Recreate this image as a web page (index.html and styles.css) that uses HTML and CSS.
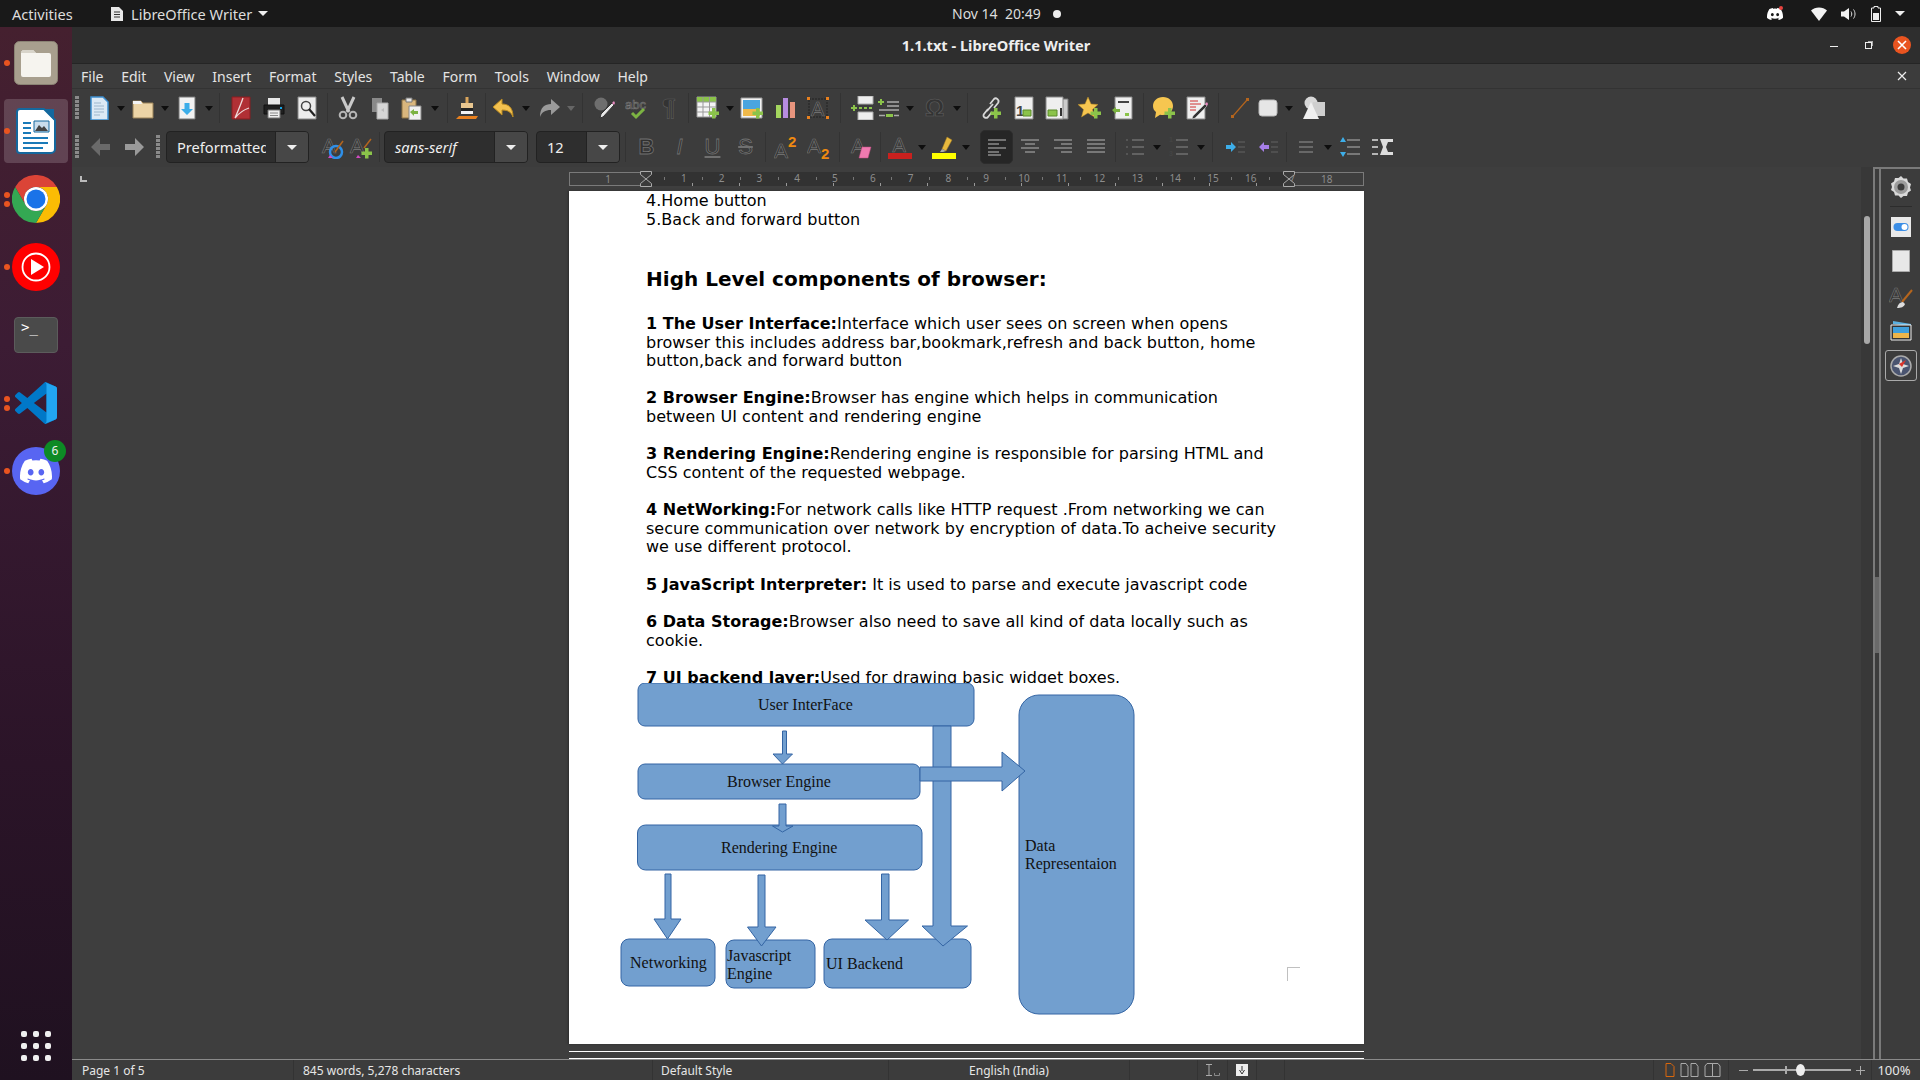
FILE: index.html
```html
<!DOCTYPE html>
<html>
<head>
  <title>1.1.txt - LibreOffice Writer</title>
  <link rel="stylesheet" href="styles.css">
</head>
<body>
  <svg class="defs" width="0" height="0">
    <defs>
      <path id="plus" d="M16 12h3.500v3.500H23V19h-3.500v3.500H16V19h-3.500v-3.500H16z" fill="#8bc34a"/>
      <symbol id="i-new" viewBox="0 0 24 24"><path d="M4 1h12l5 5v18H4z" fill="#dce9f5" stroke="#3d8ed0" stroke-width="1.500"/><path d="M7 7h7M7 10h10M7 13h10M7 16h10M7 19h6" stroke="#9db6cc"/></symbol>
      <symbol id="i-open" viewBox="0 0 24 24"><path d="M2 5h8l2 2h10v15H2z" fill="#ecd4a6" stroke="#9a8258"/><path d="M2 5h8l1 3H2z" fill="#f4f4f4"/></symbol>
      <symbol id="i-save" viewBox="0 0 24 24"><path d="M4 1h16v22H4z" fill="#f2f2f2" stroke="#777"/><path d="M9.500 7h5v6H18l-6 6-6-6h3.500z" fill="#3daee9"/></symbol>
      <symbol id="i-pdf" viewBox="0 0 24 24"><path d="M3 1h18v22H3z" fill="#b03035" stroke="#8b1d20"/><path d="M14 2C12 8 9 15 6 22M6 22c4-5 8-8 14-10" fill="none" stroke="#eed9d9" stroke-width="1.300"/></symbol>
      <symbol id="i-print" viewBox="0 0 24 24"><path d="M6 2h12v7H6z" fill="#e8e8e8"/><path d="M2 9h20v9H2z" fill="#1f1f1f" stroke="#111"/><path d="M6 14h12v8H6z" fill="#efefef" stroke="#777"/><path d="M8 17h8M8 19.500h8" stroke="#888"/><path d="M18 11h2v2h-2z" fill="#16a5e6"/></symbol>
      <symbol id="i-preview" viewBox="0 0 24 24"><path d="M3 1h18v22H3z" fill="#ececec" stroke="#888"/><circle cx="11" cy="10" r="4.500" fill="#eee" stroke="#444" stroke-width="1.500"/><path d="M14 13l6 7" stroke="#222" stroke-width="2.200"/></symbol>
      <symbol id="i-cut" viewBox="0 0 24 24"><path d="M6 1l7 15M18 1l-7 15" stroke="#c9c9c9" stroke-width="3"/><circle cx="7" cy="19" r="3.300" fill="none" stroke="#b5b5b5" stroke-width="2"/><circle cx="17" cy="19" r="3.300" fill="none" stroke="#b5b5b5" stroke-width="2"/></symbol>
      <symbol id="i-copy" viewBox="0 0 24 24"><path d="M4 2h10v14H4z" fill="#8a8a8a"/><path d="M9 7h11v16H9z" fill="#d6d6d6" stroke="#aaa"/><path d="M13 14l3-2v4z" fill="#bbb"/></symbol>
      <symbol id="i-paste" viewBox="0 0 24 24"><path d="M3 4h14v18H3z" fill="#d9b67d" stroke="#8d7345"/><path d="M7 2h6v4H7z" fill="#e8e8e8" stroke="#777"/><path d="M10 10h12v14H10z" fill="#f0f0f0" stroke="#888"/><path d="M11 16l4-3v2h4v3h-4v2z" fill="#7cb342"/></symbol>
      <symbol id="i-brush" viewBox="0 0 24 24"><path d="M10.500 1h3v6h-3z" fill="#d9a45b"/><path d="M6 7h12v5H6z" fill="#e8c690"/><path d="M6 12h12v3H6z" fill="#222"/><path d="M6 15h12v3H6z" fill="#f2f2f2"/><path d="M1 23l3-3h19l-2 3z" fill="#e8801e"/></symbol>
      <symbol id="i-undo" viewBox="0 0 24 24"><path d="M10 3v5c6 0 11 3 11 13-2-5-5-7-11-7v5L1 11z" fill="#f3c14f" stroke="#b98a22"/></symbol>
      <symbol id="i-redo" viewBox="0 0 24 24"><path d="M14 3v5C8 8 3 11 3 21c2-5 5-7 11-7v5l9-8z" fill="#9a9a9a"/></symbol>
      <symbol id="i-find" viewBox="0 0 24 24"><circle cx="8" cy="8" r="6.500" fill="#6e6e6e"/><path d="M7 22l3-1L21 9l-2-2L8 18z" fill="#e8e8e8" stroke="#333"/><path d="M19 7l2 2 1-2-1-2z" fill="#e88ac0"/></symbol>
      <symbol id="i-abc" viewBox="0 0 24 24"><text x="0" y="13" class="ic-txt" font-size="13">abc</text><path d="M7 17l4 4 8-8" fill="none" stroke="#7cb342" stroke-width="3"/></symbol>
      <symbol id="i-table" viewBox="0 0 24 24"><path d="M1 1h19v20H1z" fill="#f4f4f4" stroke="#999"/><path d="M1 1h19v5H1z" fill="#8bc34a"/><path d="M7 1v20M13.500 1v20M1 6h19M1 11h19M1 16h19" stroke="#999"/><use href="#plus"/></symbol>
      <symbol id="i-image" viewBox="0 0 24 24"><path d="M1 2h21v20H1z" fill="#f4f4f4" stroke="#999"/><path d="M3 4h17v9H3z" fill="#4aa5e0"/><path d="M3 13h17v7H3z" fill="#f0b94a"/><use href="#plus"/></symbol>
      <symbol id="i-chart" viewBox="0 0 24 24"><path d="M3 9h5v13H3z" fill="#a4d65e"/><path d="M10 2h5v20h-5z" fill="#b68ce0"/><path d="M17 6h5v16h-5z" fill="#e8957e"/></symbol>
      <symbol id="i-tbox" viewBox="0 0 24 24"><path d="M3 3h18v18H3z" fill="none" stroke="#222" stroke-dasharray="2 1"/><text x="5" y="20" class="ic-txt" font-size="20">A</text><path d="M1 1h3v3H1zM20 1h3v3h-3zM1 20h3v3H1zM20 20h3v3h-3z" fill="#e8801e"/></symbol>
      <symbol id="i-break" viewBox="0 0 24 24"><path d="M8 0h15v8H8zM8 16h15v8H8z" fill="#eee" stroke="#aaa"/><path d="M9 12h14" stroke="#8bc34a" stroke-width="2" stroke-dasharray="3 2"/><path d="M3 9h2v2h2v2H5v2H3v-2H1v-2h2z" fill="#8bc34a"/></symbol>
      <symbol id="i-field" viewBox="0 0 24 24"><path d="M3 3h2v2h2v2H5v2H3V7H1V5h2z" fill="#8bc34a"/><path d="M10 6h12M10 10h12M2 14h20" stroke="#aaa" stroke-width="1.500"/><path d="M9 18h7v3H9z" fill="#8bc34a"/><path d="M2 19.500h6M17 19.500h5" stroke="#aaa" stroke-width="1.500"/></symbol>
      <symbol id="i-link" viewBox="0 0 24 24"><path d="M12 8l4-5c2-2 6 1 4 4l-4 5M10 13l-4 5c-2 3 2 5 4 3l4-5M9 15l6-7" fill="none" stroke="#d8d8d8" stroke-width="1.800"/><use href="#plus"/></symbol>
      <symbol id="i-foot" viewBox="0 0 24 24"><path d="M3 1h18v22H3z" fill="#efefef" stroke="#888"/><text x="4" y="20" class="ic-num" font-size="15">1</text><path d="M11 14h8v6h-8z" fill="#8bc34a" stroke="#5b8a2a"/></symbol>
      <symbol id="i-end" viewBox="0 0 24 24"><path d="M6 3h17v20H6z" fill="#ccc" stroke="#777"/><path d="M1 1h17v22H1z" fill="#efefef" stroke="#888"/><path d="M3 14h9v6H3z" fill="#8bc34a" stroke="#5b8a2a"/><path d="M15 12h2v8h-2z" fill="#333"/></symbol>
      <symbol id="i-star" viewBox="0 0 24 24"><path d="M10 1l3 7 7 .500-5.500 5 2 7.500-6.500-4-6.500 4 2-7.500L0 8.500 7 8z" fill="#f6c650" stroke="#b98a22" stroke-width=".5"/><use href="#plus"/></symbol>
      <symbol id="i-cross" viewBox="0 0 24 24"><path d="M4 1h17v22H4z" fill="#efefef" stroke="#888"/><path d="M7 6h11" stroke="#444" stroke-width="2"/><path d="M1 14l4-3v2h4v3H5v2z" fill="#7cb342"/><path d="M14 17h4v3h-4z" fill="#8bc34a"/></symbol>
      <symbol id="i-comment" viewBox="0 0 24 24"><path d="M11 1c6 0 10 4 10 9s-4 9-10 9c-1 0-2 0-3-.3L3 22l1-6C2 14.500 1 12.500 1 10c0-5 4-9 10-9z" fill="#f6c650"/><use href="#plus"/></symbol>
      <symbol id="i-track" viewBox="0 0 24 24"><path d="M2 1h18v22H2z" fill="#efefef" stroke="#888"/><path d="M5 5h8M5 8h11M5 11h6M5 14h6" stroke="#d03030"/><path d="M7 23l3-1 12-12-2-2L8 20z" fill="#333" stroke="#ddd" stroke-width=".5"/><path d="M20 8l2 2 1-2-1-2z" fill="#e88ac0"/></symbol>
      <symbol id="i-line" viewBox="0 0 24 24"><path d="M5 20L19 4" stroke="#b5651d" stroke-width="1.200"/><path d="M3 19h3v3H3zM18 2h3v3h-3z" fill="#b5651d"/></symbol>
      <symbol id="i-rect" viewBox="0 0 24 24"><rect x="3" y="4" width="18" height="16" rx="3" fill="#e6e6e6" stroke="#bbb"/></symbol>
      <symbol id="i-shapes" viewBox="0 0 24 24"><circle cx="9" cy="7" r="6.500" fill="#d8d8d8"/><path d="M11 6h12v14H11z" fill="#cfcfcf"/><path d="M9 6l8 17H1z" fill="#f0f0f0"/></symbol>
      <symbol id="i-back" viewBox="0 0 24 24"><path d="M11 3v6h10v6H11v6L2 12z" fill="#6a6a6a"/></symbol>
      <symbol id="i-fwd" viewBox="0 0 24 24"><path d="M13 3v6H3v6h10v6l9-9z" fill="#9a9a9a"/></symbol>
      <symbol id="i-a-up" viewBox="0 0 24 24"><text x="1" y="18" class="ic-txt" font-size="21">A</text><circle cx="15" cy="17" r="6" fill="none" stroke="#2e8fe8" stroke-width="2.500"/><path d="M14 17l8-11" stroke="#b5651d" stroke-width="1.500"/><path d="M7 23h5l-3-3z" fill="#d04ac0"/></symbol>
      <symbol id="i-a-new" viewBox="0 0 24 24"><text x="1" y="18" class="ic-txt" font-size="21">A</text><path d="M15 13l7-9" stroke="#b5651d" stroke-width="1.500"/><path d="M7 23h5l-3-3z" fill="#d04ac0"/><use href="#plus" transform="translate(0 1)"/></symbol>
      <symbol id="i-sup" viewBox="0 0 24 24"><text x="0" y="23" class="ic-txt" font-size="21">A</text><text x="14" y="12" class="ic-or" font-size="15">2</text></symbol>
      <symbol id="i-sub" viewBox="0 0 24 24"><text x="0" y="18" class="ic-txt" font-size="21">A</text><text x="14" y="24" class="ic-or" font-size="15">2</text></symbol>
      <symbol id="i-erase" viewBox="0 0 24 24"><text x="2" y="18" class="ic-txt" font-size="21">A</text><path d="M13 12h9l-3 11h-9z" fill="#f07ab0" stroke="#c04a80" stroke-width=".5"/></symbol>
      <symbol id="i-color" viewBox="0 0 24 24"><text x="4.500" y="17" class="ic-txt" font-size="20">A</text><path d="M0 18h24v6H0z" fill="#c9211e"/></symbol>
      <symbol id="i-hilite" viewBox="0 0 24 24"><path d="M10 14l5-12 5 3-6 11z" fill="#e8b93e" stroke="#a07820" stroke-width=".5"/><path d="M8 17l2-3 4 2-3 1z" fill="#aaa"/><path d="M0 18h24v6H0z" fill="#ffff00"/></symbol>
      <symbol id="i-al" viewBox="0 0 24 24"><path d="M3 5h18M3 9h11M3 13h18M3 17h11M3 20h13" stroke="#8c8c8c" stroke-width="1.500"/></symbol>
      <symbol id="i-ac" viewBox="0 0 24 24"><path d="M3 5h18M7 9h10M3 13h18M7 17h10" stroke="#8c8c8c" stroke-width="1.500"/></symbol>
      <symbol id="i-ar" viewBox="0 0 24 24"><path d="M3 5h18M10 9h11M3 13h18M10 17h11" stroke="#8c8c8c" stroke-width="1.500"/></symbol>
      <symbol id="i-aj" viewBox="0 0 24 24"><path d="M3 5h18M3 9h18M3 13h18M3 17h18" stroke="#8c8c8c" stroke-width="1.500"/></symbol>
      <symbol id="i-ul" viewBox="0 0 24 24"><path d="M9 5h12M9 12h12M9 19h12" stroke="#6f6f6f" stroke-width="1.500"/><path d="M3 4h2v2H3zM3 11h2v2H3zM3 18h2v2H3z" fill="#555"/></symbol>
      <symbol id="i-ol" viewBox="0 0 24 24"><path d="M9 5h12M9 12h12M9 19h12" stroke="#6f6f6f" stroke-width="1.500"/><text x="2" y="7" class="ic-num" font-size="7">1</text><text x="2" y="21" class="ic-num" font-size="7">3</text></symbol>
      <symbol id="i-ind" viewBox="0 0 24 24"><path d="M3 10h5V7l5 5-5 5v-3H3z" fill="#3daee9"/><path d="M15 7h7M15 12h7M15 17h7" stroke="#555" stroke-width="1.500"/></symbol>
      <symbol id="i-out" viewBox="0 0 24 24"><path d="M13 10H8V7l-5 5 5 5v-3h5z" fill="#a67ee8"/><path d="M15 7h7M15 12h7M15 17h7" stroke="#555" stroke-width="1.500"/></symbol>
      <symbol id="i-lines" viewBox="0 0 24 24"><path d="M5 7h14M5 12h14M5 17h14" stroke="#777" stroke-width="1.500"/></symbol>
      <symbol id="i-para" viewBox="0 0 24 24"><path d="M9 5h13M9 12h13M9 19h13" stroke="#8c8c8c" stroke-width="1.500"/><path d="M5 2l3 5H2zM5 22l3-5H2z" fill="#3daee9"/></symbol>
      <symbol id="i-rind" viewBox="0 0 24 24"><path d="M1 5h6M1 12h6M1 19h6" stroke="#ddd" stroke-width="1.500"/><path d="M9 4h13v3h-5l-2 5 2 5h5v3H9l3-8z" fill="#ddd"/></symbol>
      <symbol id="discord" viewBox="0 0 24 24"><path d="M20.317 4.370a19.791 19.791 0 0 0-4.885-1.515.074.074 0 0 0-.079.037c-.21.375-.444.864-.608 1.250a18.270 18.270 0 0 0-5.487 0 12.640 12.640 0 0 0-.617-1.250.077.077 0 0 0-.079-.037A19.736 19.736 0 0 0 3.677 4.370a.07.07 0 0 0-.032.027C.533 9.046-.32 13.580.099 18.057a.082.082 0 0 0 .031.057 19.900 19.900 0 0 0 5.993 3.030.078.078 0 0 0 .084-.028 14.090 14.090 0 0 0 1.226-1.994.076.076 0 0 0-.041-.106 13.107 13.107 0 0 1-1.872-.892.077.077 0 0 1-.008-.128 10.200 10.200 0 0 0 .372-.292.074.074 0 0 1 .077-.01c3.928 1.793 8.180 1.793 12.062 0a.074.074 0 0 1 .078.01c.12.098.246.198.373.292a.077.077 0 0 1-.006.127 12.299 12.299 0 0 1-1.873.892.077.077 0 0 0-.041.107c.36.698.772 1.362 1.225 1.993a.076.076 0 0 0 .084.028 19.839 19.839 0 0 0 6.002-3.030.077.077 0 0 0 .032-.054c.5-5.177-.838-9.674-3.549-13.660a.061.061 0 0 0-.031-.03zM8.020 15.330c-1.183 0-2.157-1.085-2.157-2.419 0-1.333.956-2.419 2.157-2.419 1.210 0 2.176 1.096 2.157 2.420 0 1.333-.956 2.418-2.157 2.418zm7.975 0c-1.183 0-2.157-1.085-2.157-2.419 0-1.333.955-2.419 2.157-2.419 1.210 0 2.176 1.096 2.157 2.420 0 1.333-.946 2.418-2.157 2.418z" fill="#fff"/></symbol>
    </defs>
  </svg>

  <div class="topbar">
    <div class="top-left">
      <span class="activities">Activities</span>
      <svg class="app-doc" width="12" height="14" viewBox="0 0 12 14"><path d="M0 0h8l4 4v10H0z" fill="#e8e8e8"/><path d="M3 5h6M3 7.500h6M3 10h6" stroke="#333"/></svg>
      <span>LibreOffice Writer</span>
      <i class="caret"></i>
    </div>
    <div class="clock">Nov 14&nbsp; 20:49 <i class="rec"></i></div>
    <div class="tray">
      <span class="tray-discord"><svg width="16" height="16"><use href="#discord"/></svg><i></i></span>
      <svg width="16" height="14" viewBox="0 0 16 14"><path d="M0 3.500C4-.5 12-.5 16 3.500L8 14z" fill="#f2f2f2"/></svg>
      <svg width="16" height="14" viewBox="0 0 16 14"><path d="M0 4.500h3L8 1v12L3 9.500H0z" fill="#f2f2f2"/><path d="M10 4.500c1 1.500 1 3.500 0 5M12.500 2.500c2 2.500 2 6.500 0 9" fill="none" stroke="#ddd"/></svg>
      <svg width="10" height="16" viewBox="0 0 10 16"><path d="M3 .5h4v1.500h2.500v13.500H.500V2H3z" fill="none" stroke="#eee"/><path d="M2 7h6v7H2z" fill="#eee"/></svg>
      <i class="caret"></i>
    </div>
  </div>

  <div class="main">
    <div class="dock">
      <div class="dock-item"><i class="dot"></i>
        <svg width="44" height="44" viewBox="0 0 44 44"><rect x=".5" y=".5" width="43" height="43" rx="5" fill="#a89f8e" stroke="#8a8374"/><path d="M7 11l2-2h10l3 3h13a2 2 0 0 1 2 2v20a2 2 0 0 1-2 2H9a2 2 0 0 1-2-2z" fill="#f6f4ef"/><path d="M7 11l2-2h10l3 3H7z" fill="#d8d4ca"/></svg>
      </div>
      <div class="dock-item active"><i class="dot"></i>
        <svg width="40" height="46" viewBox="0 0 40 46"><path d="M4 1h24l11 11v29a4 4 0 0 1-4 4H4a3 3 0 0 1-3-3V4a3 3 0 0 1 3-3z" fill="#fff" stroke="#14689e" stroke-width="2"/><path d="M28 1h10v11z" fill="#14689e"/><path d="M7 14h8v2H7zM7 19h8v2H7zM7 24h8v2H7zM7 29h25v2H7zM7 34h25v2H7zM7 39h20v2H7z" fill="#1a7ab8"/><path d="M18 13h15v11H18z" fill="#c9dded" stroke="#14689e"/><path d="M19 23l4-6 3 3 2-2 4 5z" fill="#444"/></svg>
      </div>
      <div class="dock-item"><i class="dot hi"></i><i class="dot lo"></i>
        <svg width="48" height="48" viewBox="0 0 48 48"><path d="M3.200 12A24 24 0 0 1 44.800 12H24A12 12 0 0 0 13.600 30z" fill="#db4437"/><path d="M44.800 12A24 24 0 0 1 24 48L34.400 30A12 12 0 0 0 24 12z" fill="#fbbc04"/><path d="M3.200 12L13.600 30A12 12 0 0 0 34.400 30L24 48A24 24 0 0 1 3.200 12z" fill="#34a853"/><circle cx="24" cy="24" r="12" fill="#fff"/><circle cx="24" cy="24" r="9.500" fill="#1a73e8"/></svg>
      </div>
      <div class="dock-item"><i class="dot"></i>
        <svg width="48" height="48" viewBox="0 0 48 48"><circle cx="24" cy="24" r="24" fill="#f00"/><circle cx="24" cy="24" r="13.500" fill="none" stroke="#fff" stroke-width="1.800"/><path d="M19 16l13 8-13 8z" fill="#fff"/></svg>
      </div>
      <div class="dock-item">
        <div class="terminal">&gt;_</div>
      </div>
      <div class="dock-item"><i class="dot hi"></i><i class="dot lo"></i>
        <svg width="42" height="42" viewBox="0 0 100 100"><path d="M71 99.300a6 6 0 0 0 5-.2l20.500-9.900a6 6 0 0 0 3.500-5.600V16.400a6 6 0 0 0-3.500-5.600L76 .9a6 6 0 0 0-7 1.200L29.400 38.100 12.200 25a4.200 4.200 0 0 0-5.300.2l-5.500 5a4.200 4.200 0 0 0 0 6.200L16.300 50 1.400 63.600a4.200 4.200 0 0 0 0 6.200l5.500 5a4.200 4.200 0 0 0 5.300.2l17.200-13.100L69 98a6 6 0 0 0 2 1.300zM75 27.300L45 50l30 22.700z" fill="#0078c8" fill-rule="evenodd"/><path d="M71 .7l25.500 10.100a6 6 0 0 1 3.500 5.600v67.200a6 6 0 0 1-3.500 5.600L71 99.300a6 6 0 0 0 4-5.800V6.500a6 6 0 0 0-4-5.800z" fill="#22a5f1"/></svg>
      </div>
      <div class="dock-item"><i class="dot"></i>
        <div class="discord-app"><svg width="32" height="32"><use href="#discord"/></svg><span class="badge">6</span></div>
      </div>
      <div class="apps">
        <i></i><i></i><i></i><i></i><i></i><i></i><i></i><i></i><i></i>
      </div>
    </div>

    <div class="window">
      <div class="titlebar">
        <span class="title">1.1.txt - LibreOffice Writer</span>
        <div class="win-btns">
          <i class="win-min"></i>
          <i class="win-max"></i>
          <span class="win-close"><svg width="10" height="10" viewBox="0 0 10 10"><path d="M1 1l8 8M9 1l-8 8" stroke="#fff" stroke-width="1.600"/></svg></span>
        </div>
      </div>

      <div class="menubar">
        <span>File</span><span>Edit</span><span>View</span><span>Insert</span><span>Format</span><span>Styles</span><span>Table</span><span>Form</span><span>Tools</span><span>Window</span><span>Help</span>
        <svg class="doc-close" width="10" height="10" viewBox="0 0 10 10"><path d="M1 1l8 8M9 1l-8 8" stroke="#eee" stroke-width="1.200"/></svg>
      </div>

      <div class="toolbar tb1">
        <i class="grip"></i><i class="sep s3"></i>
        <span class="b"><svg><use href="#i-new"/></svg></span><i class="a"></i>
        <span class="b"><svg><use href="#i-open"/></svg></span><i class="a"></i>
        <span class="b"><svg><use href="#i-save"/></svg></span><i class="a"></i>
        <i class="sep s10 ln"></i>
        <span class="b"><svg><use href="#i-pdf"/></svg></span>
        <span class="b"><svg><use href="#i-print"/></svg></span>
        <span class="b"><svg><use href="#i-preview"/></svg></span>
        <i class="sep s8 ln"></i>
        <span class="b"><svg><use href="#i-cut"/></svg></span>
        <span class="b n"><svg><use href="#i-copy"/></svg></span>
        <span class="b n"><svg><use href="#i-paste"/></svg></span><i class="a w"></i>
        <i class="sep s7 ln"></i>
        <span class="b"><svg><use href="#i-brush"/></svg></span>
        <i class="sep s4 ln"></i>
        <span class="b"><svg><use href="#i-undo"/></svg></span><i class="a"></i>
        <i class="sep s1"></i>
        <span class="b"><svg><use href="#i-redo"/></svg></span><i class="a off"></i>
        <i class="sep s12 ln"></i>
        <span class="b"><svg><use href="#i-find"/></svg></span>
        <span class="b n"><svg><use href="#i-abc"/></svg></span>
        <span class="b pilcrow">¶</span>
        <i class="sep s5 ln"></i>
        <span class="b"><svg><use href="#i-table"/></svg></span><i class="a"></i>
        <span class="b"><svg><use href="#i-image"/></svg></span>
        <span class="b"><svg><use href="#i-chart"/></svg></span>
        <span class="b"><svg><use href="#i-tbox"/></svg></span>
        <i class="sep s12 ln"></i>
        <span class="b n"><svg><use href="#i-break"/></svg></span>
        <span class="b t"><svg><use href="#i-field"/></svg></span><i class="a w"></i>
        <span class="b omega">Ω</span><i class="a"></i>
        <i class="sep s11 ln"></i>
        <span class="b"><svg><use href="#i-link"/></svg></span><i class="sep s1"></i>
        <span class="b"><svg><use href="#i-foot"/></svg></span>
        <span class="b"><svg><use href="#i-end"/></svg></span>
        <span class="b"><svg><use href="#i-star"/></svg></span>
        <span class="b"><svg><use href="#i-cross"/></svg></span>
        <i class="sep s8 ln"></i>
        <span class="b"><svg><use href="#i-comment"/></svg></span>
        <span class="b"><svg><use href="#i-track"/></svg></span>
        <i class="sep s10 ln"></i>
        <span class="b"><svg><use href="#i-line"/></svg></span>
        <span class="b t"><svg><use href="#i-rect"/></svg></span><i class="a w"></i>
        <span class="b"><svg><use href="#i-shapes"/></svg></span>
      </div>

      <div class="toolbar tb2">
        <i class="grip"></i><i class="sep s5"></i>
        <span class="b"><svg><use href="#i-back"/></svg></span>
        <span class="b"><svg><use href="#i-fwd"/></svg></span>
        <i class="sep s5"></i><i class="grip"></i><i class="sep s6"></i>
        <div class="combo c-style"><span class="val">Preformatted Text</span><i class="drop"></i></div>
        <i class="sep s10"></i>
        <span class="b k"><svg><use href="#i-a-up"/></svg></span>
        <span class="b k"><svg><use href="#i-a-new"/></svg></span>
        <i class="sep s9 ln"></i>
        <div class="combo c-font"><span class="val it">sans-serif</span><i class="drop"></i></div>
        <i class="sep s8"></i>
        <div class="combo c-size"><span class="val">12</span><i class="drop"></i></div>
        <i class="sep s10 ln"></i>
        <span class="b fmt bold">B</span>
        <span class="b fmt ital">I</span>
        <span class="b fmt und">U</span>
        <span class="b fmt str">S</span>
        <i class="sep s7 ln"></i>
        <span class="b"><svg><use href="#i-sup"/></svg></span>
        <span class="b"><svg><use href="#i-sub"/></svg></span>
        <i class="sep s9 ln"></i>
        <span class="b"><svg><use href="#i-erase"/></svg></span>
        <i class="sep s6 ln"></i>
        <span class="b"><svg><use href="#i-color"/></svg></span><i class="a"></i>
        <span class="b"><svg><use href="#i-hilite"/></svg></span><i class="a"></i>
        <i class="sep s9"></i>
        <span class="b on"><svg><use href="#i-al"/></svg></span>
        <span class="b"><svg><use href="#i-ac"/></svg></span>
        <span class="b"><svg><use href="#i-ar"/></svg></span>
        <span class="b"><svg><use href="#i-aj"/></svg></span>
        <i class="sep s6 ln"></i>
        <span class="b"><svg><use href="#i-ul"/></svg></span><i class="a"></i>
        <span class="b"><svg><use href="#i-ol"/></svg></span><i class="a"></i>
        <i class="sep s12 ln"></i>
        <span class="b"><svg><use href="#i-ind"/></svg></span>
        <span class="b"><svg><use href="#i-out"/></svg></span>
        <i class="sep s5 ln"></i>
        <span class="b"><svg><use href="#i-lines"/></svg></span><i class="a"></i>
        <span class="b"><svg><use href="#i-para"/></svg></span>
        <span class="b"><svg><use href="#i-rind"/></svg></span>
      </div>

      <div class="editor">
        <div class="doc-col">
          <div class="ruler-row">
            <i class="tab-type"></i>
            <div class="ruler">
              <div class="r-margin r-left"><span>1</span></div>
              <div class="r-main">
                <span>1</span><span>2</span><span>3</span><span>4</span><span>5</span><span>6</span><span>7</span><span>8</span><span>9</span><span>10</span><span>11</span><span>12</span><span>13</span><span>14</span><span>15</span><span>16</span>
                <svg class="hour h-l" width="12" height="16" viewBox="0 0 12 16"><path d="M.5.5h11v3L6 8l5.500 4.500v3H.5v-3L6 8 .5 3.500z" fill="#3a3a3a" stroke="#aaa"/></svg>
                <svg class="hour h-r" width="12" height="16" viewBox="0 0 12 16"><path d="M.5.5h11v3L6 8l5.500 4.500v3H.5v-3L6 8 .5 3.500z" fill="#3a3a3a" stroke="#aaa"/></svg>
              </div>
              <div class="r-margin r-right"><span>17</span><span>18</span></div>
            </div>
          </div>
          <div class="doc-area">
            <div class="page">
              <p>4.Home button<br>5.Back and forward button</p>
              <h2>High Level components of browser:</h2>
              <p><b>1 The User Interface:</b>Interface which user sees on screen when opens<br>browser this includes address bar,bookmark,refresh and back button, home<br>button,back and forward button</p>
              <p><b>2 Browser Engine:</b>Browser has engine which helps in communication<br>between UI content and rendering engine</p>
              <p><b>3 Rendering Engine:</b>Rendering engine is responsible for parsing HTML and<br>CSS content of the requested webpage.</p>
              <p><b>4 NetWorking:</b>For network calls like HTTP request .From networking we can<br>secure communication over network by encryption of data.To acheive security<br>we use different protocol.</p>
              <p><b>5 JavaScript Interpreter:</b> It is used to parse and execute javascript code</p>
              <p><b>6 Data Storage:</b>Browser also need to save all kind of data locally such as<br>cookie.</p>
              <p><b>7 UI backend layer:</b>Used for drawing basic widget boxes.</p>

              <svg class="diagram" width="520" height="340" viewBox="620 683 520 340">
                <g class="shape">
                  <rect x="638" y="683" width="336" height="43" rx="7"/>
                  <path d="M782.500 731h4v23h6l-10 10-9.500-10h9.500z"/>
                  <rect x="621" y="939" width="94" height="47" rx="8"/>
                  <rect x="726" y="940" width="89" height="48" rx="8"/>
                  <rect x="824" y="939" width="147" height="49" rx="8"/>
                  <rect x="1019" y="695" width="115" height="319" rx="20"/>
                  <path d="M933 726h18v200h16.500L943 946l-21-20h11z"/>
                  <rect x="638" y="764" width="282" height="35" rx="7"/>
                  <path d="M920 767h82v-15l23 19-23 20v-10h-82z"/>
                  <rect x="637.500" y="825" width="284.500" height="45" rx="8"/>
                  <path d="M779 804h7v22h7l-10.500 6-10-6h6.500z"/>
                  <path d="M665 874h6v45h10l-13.500 20L654 919h11z"/>
                  <path d="M758 875h7v52h11l-14.500 19-14-19H758z"/>
                  <path d="M881.500 874h7.500v46h19.500l-21.500 20-22-20h16.500z"/>
                </g>
                <g class="labels">
                  <text x="758" y="710">User InterFace</text>
                  <text x="727" y="787">Browser Engine</text>
                  <text x="721" y="853">Rendering Engine</text>
                  <text x="630" y="968">Networking</text>
                  <text x="727" y="961">Javascript</text>
                  <text x="727" y="979">Engine</text>
                  <text x="826" y="969">UI Backend</text>
                  <text x="1025" y="851">Data</text>
                  <text x="1025" y="869">Representaion</text>
                </g>
              </svg>
              <i class="crop-mark"></i>
            </div>
            <div class="page-gap"></div>
          </div>
        </div>
        <div class="scrollbar"><i class="thumb"></i></div>
        <div class="deck-grip"><i class="deck-handle"></i></div>
        <div class="sidebar">
          <svg width="24" height="24" viewBox="0 0 24 24"><path d="M12 1l2.500 2.500h3.500l1 3.500 3 2-1 3.500 1 3-3 2-1 3.500h-3.500L12 23l-2.500-2.500H6l-1-3.500-3-2 1-3-1-3.500 3-2 1-3.500h3.500z" fill="#d9d9d9"/><circle cx="12" cy="12" r="7" fill="#9c9c9c"/><circle cx="12" cy="12" r="3.500" fill="#3c3c3c"/></svg>
          <i class="side-sep"></i>
          <svg width="20" height="20" viewBox="0 0 20 20"><path d="M0 0h20v20H0z" fill="#e9e9e9"/><rect x="2.500" y="6" width="15" height="8" rx="4" fill="#3b8ee6"/><circle cx="13.500" cy="10" r="3" fill="#fff"/></svg>
          <svg width="18" height="22" viewBox="0 0 18 22"><path d="M.5.5h17v21H.5z" fill="#e8e8e8" stroke="#aaa"/></svg>
          <svg width="24" height="24" viewBox="0 0 24 24"><text x="0" y="18" class="ic-txt" font-size="21">A</text><path d="M13 18l10-12" stroke="#b5651d" stroke-width="2"/><path d="M8 24c1-4 3-6 6-6l2 2c-1 3-4 4-8 4z" fill="#ddd"/></svg>
          <svg width="22" height="20" viewBox="0 0 22 20"><path d="M3 0l18 3v2L3 3z" fill="#5bb0e0"/><path d="M1 4h20v15H1z" fill="#333" stroke="#eee"/><path d="M3 6h16v6H3z" fill="#3f9fdc"/><path d="M3 12h16v5H3z" fill="#eeb54a"/></svg>
          <div class="side-on">
            <svg width="22" height="22" viewBox="0 0 22 22"><circle cx="11" cy="11" r="10" fill="#4a5470" stroke="#aaa" stroke-width="1.500"/><path d="M11 3l2 6 6 2-6 2-2 6-2-6-6-2 6-2z" fill="#ddd"/><path d="M16 5l-4 7-3-3z" fill="#d8332b"/></svg>
          </div>
        </div>
      </div>

      <div class="statusbar">
        <span class="cell c-page">Page 1 of 5</span>
        <span class="cell c-words">845 words, 5,278 characters</span>
        <span class="cell c-pstyle">Default Style</span>
        <span class="cell c-lang">English (India)</span>
        <span class="cell c-s0"></span>
        <span class="cell c-ins"><svg width="16" height="12" viewBox="0 0 16 12"><path d="M1 .5h6M4 .5v11M1 11.500h6" stroke="#aaa"/><path d="M9.500 9v2.500h5V9" fill="none" stroke="#888"/></svg></span>
        <span class="cell c-sel"><svg width="12" height="12" viewBox="0 0 12 12"><path d="M0 0h12v12H0z" fill="#eee"/><path d="M6 2v5M3.500 6L6 10l2.500-4" stroke="#333" fill="none"/></svg></span>
        <span class="cell c-s1"></span>
        <span class="cell c-fill"></span>
        <span class="cell c-views">
          <svg width="10" height="14" viewBox="0 0 10 14"><path d="M1 .5h5l3 3v10H1z" fill="none" stroke="#d9670c"/></svg>
          <svg width="19" height="14" viewBox="0 0 19 14"><path d="M1 .5h5l2 3v10H1zM11 .5h5l2 3v10h-7z" fill="none" stroke="#aaa"/></svg>
          <svg width="17" height="14" viewBox="0 0 17 14"><path d="M8.500 13.500H1V3l2-2.500h5.500zM8.500 13.500H16V3L14 .5H8.500z" fill="none" stroke="#aaa"/></svg>
        </span>
        <span class="cell c-zoom"><i class="z-minus"></i><span class="z-track"><i class="z-tick"></i><i class="z-thumb"></i></span><i class="z-plus"></i></span>
        <span class="cell c-pct">100%</span>
      </div>
    </div>
  </div>
</body>
</html>
```

FILE: styles.css
```css
* {
  box-sizing: border-box;
}
html, body {
  margin: 0;
  height: 100%;
}
body {
  width: 1920px;
  height: 1080px;
  overflow: hidden;
  display: flex;
  flex-direction: column;
  font-family: "Noto Sans", sans-serif;
  font-size: 14px;
  color: #eee;
  background-color: #3e3e3e;
}
i {
  display: block;
  font-style: normal;
}
.defs {
  position: absolute;
}
.ic-txt {
  font-family: "Liberation Sans", sans-serif;
  fill: #343434;
  stroke: #7a7a7a;
  stroke-width: 0.6;
}
.ic-num {
  font-family: "Liberation Sans", sans-serif;
  font-weight: bold;
  fill: #444;
}
.ic-or {
  font-family: "Liberation Sans", sans-serif;
  font-weight: bold;
  fill: #f08a10;
}

/* top bar */
.topbar {
  height: 27px;
  flex: none;
  display: flex;
  align-items: center;
  background-color: #191919;
  font-size: 14px;
  color: #ddd;
}
.top-left {
  width: 952px;
  display: flex;
  align-items: center;
  padding-left: 12px;
  font-size: 14.6px;
}
.activities {
  width: 99px;
}
.app-doc {
  margin-right: 8px;
}
.caret {
  width: 0;
  height: 0;
  border-left: 5px solid transparent;
  border-right: 5px solid transparent;
  border-top: 5px solid #eee;
  margin-left: 6px;
}
.clock {
  display: flex;
  align-items: center;
  gap: 12px;
}
.rec {
  width: 8px;
  height: 8px;
  border-radius: 50%;
  background-color: #eee;
}
.tray {
  margin-left: auto;
  display: flex;
  align-items: center;
  gap: 14px;
  padding-right: 15px;
}
.tray .caret {
  margin-left: 0;
}
.tray-discord {
  position: relative;
  display: flex;
  margin-right: 14px;
}
.tray-discord i {
  position: absolute;
  top: 0;
  right: 0;
  width: 4px;
  height: 4px;
  border-radius: 50%;
  background-color: #e8433f;
}

.main {
  flex: 1;
  display: flex;
  min-height: 0;
}

/* dock */
.dock {
  width: 72px;
  flex: none;
  display: flex;
  flex-direction: column;
  padding-top: 2px;
  background: linear-gradient(#45202f, #3c1c34 30%, #2b1428 70%, #1f1120);
}
.dock-item {
  position: relative;
  height: 68px;
  flex: none;
  display: flex;
  align-items: center;
  justify-content: center;
}
.dock-item.active::before {
  content: "";
  position: absolute;
  left: 4px;
  top: 2px;
  width: 64px;
  height: 64px;
  border-radius: 4px;
  background-color: rgba(255, 255, 255, 0.17);
}
.dock-item svg {
  position: relative;
}
.dot {
  position: absolute;
  left: 4px;
  top: 31px;
  width: 6px;
  height: 6px;
  border-radius: 50%;
  background-color: #e95420;
}
.dot.hi {
  top: 27px;
}
.dot.lo {
  top: 36px;
}
.terminal {
  width: 44px;
  height: 36px;
  padding: 1px 0 0 6px;
  border-radius: 4px;
  background-color: #4a4a4a;
  border: 1px solid #5c5c5c;
  font-family: "DejaVu Sans Mono", monospace;
  font-size: 14px;
  color: #fff;
}
.discord-app {
  position: relative;
  width: 48px;
  height: 48px;
  border-radius: 50%;
  background-color: #5865f2;
  display: flex;
  align-items: center;
  justify-content: center;
}
.badge {
  position: absolute;
  top: -7px;
  right: -6px;
  width: 22px;
  height: 22px;
  border-radius: 50%;
  background-color: #0d8a25;
  color: #eee;
  font-size: 12px;
  line-height: 22px;
  text-align: center;
}
.apps {
  margin-top: auto;
  margin-bottom: 19px;
  margin-left: 21px;
  width: 30px;
  display: grid;
  grid-template-columns: repeat(3, 6px);
  grid-auto-rows: 6px;
  column-gap: 6px;
  row-gap: 6px;
}
.apps i {
  border-radius: 2px;
  background-color: #f0f0f0;
}

/* window */
.window {
  flex: 1;
  min-width: 0;
  display: flex;
  flex-direction: column;
  background-color: #3c3c3c;
}
.titlebar {
  height: 37px;
  flex: none;
  display: flex;
  align-items: center;
  justify-content: center;
  background-color: #2e2e2e;
  border-bottom: 1px solid #252525;
  position: relative;
}
.title {
  font-weight: bold;
  font-size: 14.6px;
  color: #eee;
}
.win-btns {
  position: absolute;
  right: 9px;
  top: 9px;
  display: flex;
  align-items: center;
}
.win-min {
  width: 8px;
  height: 1px;
  margin: 2px 27px 0 0;
  border-top: 1px solid #eee;
}
.win-max {
  width: 7px;
  height: 7px;
  margin-right: 21px;
  border: 1px solid #eee;
  box-shadow: 2px -2px 0 -1px #aaa;
}
.win-close {
  width: 18px;
  height: 18px;
  border-radius: 50%;
  background-color: #e95420;
  display: flex;
  align-items: center;
  justify-content: center;
}
.menubar {
  height: 25px;
  flex: none;
  display: flex;
  align-items: center;
  gap: 17.75px;
  padding: 0 37px 0 9px;
  border-bottom: 1px solid #333;
  background-color: #3c3c3c;
  font-size: 14px;
  color: #e4e4e4;
}
.doc-close {
  margin-left: auto;
  margin-right: -24px;
}

/* toolbars */
.toolbar {
  flex: none;
  display: flex;
  align-items: center;
  background-color: #3c3c3c;
}
.tb1 {
  height: 36px;
  padding: 2px 0 0 3px;
}
.tb2 {
  height: 42px;
  padding: 2px 0 0 3px;
}
.grip {
  width: 4px;
  height: 24px;
  flex: none;
  background: repeating-linear-gradient(#8a8a8a 0 3px, transparent 3px 4px);
}
.b {
  width: 33px;
  height: 34px;
  flex: none;
  display: flex;
  align-items: center;
  justify-content: center;
}
.b svg {
  width: 24px;
  height: 24px;
}
.b.n {
  width: 31px;
}
.b.t {
  width: 24px;
}
.b.k {
  width: 28px;
}
.b.on {
  background-color: #262626;
  border-radius: 5px;
  border: 1px solid #2c2c2c;
}
.a {
  width: 11px;
  height: 4px;
  flex: none;
  position: relative;
}
.a::after {
  content: "";
  position: absolute;
  left: calc(50% - 4px);
  top: 0;
  border-left: 4px solid transparent;
  border-right: 4px solid transparent;
  border-top: 5px solid #0e0e0e;
}
.a.w {
  width: 17px;
}
.a.off::after {
  border-top-color: #666;
}
.sep {
  flex: none;
  height: 30px;
}
.sep.ln {
  background: linear-gradient(#333, #333) center / 1px 100% no-repeat;
}
.s1 { width: 1px; }
.s3 { width: 3.5px; }
.s4 { width: 4px; }
.s5 { width: 5.5px; }
.s6 { width: 6px; }
.s7 { width: 7px; }
.s8 { width: 8px; }
.s9 { width: 9px; }
.s10 { width: 10px; }
.s11 { width: 11px; }
.s12 { width: 12px; }
.pilcrow,
.omega {
  font-family: "Liberation Sans", sans-serif;
  font-size: 24px;
  font-weight: bold;
  color: #333;
  -webkit-text-stroke: 0.6px #5f5f5f;
}
.fmt {
  font-family: "Liberation Sans", sans-serif;
  font-size: 22px;
  color: #303030;
  -webkit-text-stroke: 0.8px #707070;
}
.bold {
  font-weight: bold;
}
.ital {
  font-style: italic;
}
.und {
  text-decoration: underline;
}
.str {
  text-decoration: line-through;
}
.combo {
  height: 32px;
  flex: none;
  display: flex;
  align-items: center;
  border: 1px solid #222;
  border-radius: 4px;
  background-color: #2e2e2e;
  overflow: hidden;
  color: #eee;
  font-size: 14.6px;
}
.val {
  flex: 1;
  min-width: 0;
  padding-left: 10px;
  white-space: nowrap;
  overflow: hidden;
}
.val.it {
  font-style: italic;
}
.drop {
  width: 33px;
  height: 100%;
  flex: none;
  position: relative;
  background-color: #474747;
  border-left: 1px solid #222;
}
.drop::after {
  content: "";
  position: absolute;
  left: 11px;
  top: 13px;
  border-left: 5px solid transparent;
  border-right: 5px solid transparent;
  border-top: 5px solid #eee;
}
.c-style {
  width: 143px;
}
.c-style .val {
  margin-right: 9px;
}
.c-font {
  width: 144px;
}
.c-size {
  width: 84px;
}

/* editor */
.editor {
  flex: 1;
  min-height: 0;
  display: flex;
}
.doc-col {
  flex: 1;
  min-width: 0;
  display: flex;
  flex-direction: column;
  background-color: #3e3e3e;
}
.ruler-row {
  height: 22px;
  flex: none;
  position: relative;
  padding: 5px 0 0 497px;
}
.tab-type {
  position: absolute;
  left: 8px;
  top: 9px;
  width: 7px;
  height: 6px;
  border-left: 2px solid #bbb;
  border-bottom: 2px solid #bbb;
}
.ruler {
  width: 795px;
  height: 13px;
  display: flex;
  font-size: 10px;
  line-height: 13px;
  color: #8d8d8d;
}
.r-margin {
  display: flex;
  border: 1px solid #7a7a7a;
  height: 14px;
}
.r-left {
  width: 77px;
  border-right: none;
  justify-content: center;
}
.r-right {
  flex: 1;
  border-left: none;
  padding-left: 0;
}
.r-right span {
  width: 37.8px;
  text-align: center;
}
.r-right span:first-child {
  margin-left: -19px;
}
.r-main {
  position: relative;
  width: 643px;
  height: 14px;
  padding-left: 18.9px;
  display: flex;
  background-color: #323232;
  background-image:
    repeating-linear-gradient(to right, transparent 0 46px, #999 46px 47px),
    repeating-linear-gradient(to right, transparent 0 18.4px, #777 18.4px 19.4px, transparent 19.4px 37.8px);
  background-size: 100% 3px, 100% 3px;
  background-position: 0 100%, 0 5px;
  background-repeat: no-repeat;
}
.r-main span {
  width: 37.8px;
  flex: none;
  text-align: center;
}
.hour {
  position: absolute;
  top: -1px;
}
.h-l {
  left: -6px;
}
.h-r {
  right: -6px;
}
.doc-area {
  flex: 1;
  min-height: 0;
  padding: 2px 0 0 497px;
}
.page {
  position: relative;
  width: 794.5px;
  height: 853px;
  overflow: hidden;
  padding: 1px 0 0 77px;
  background-color: #fff;
  box-shadow: -1px 0 2px #2c2c2c;
  font-family: "DejaVu Sans", sans-serif;
  font-size: 16px;
  line-height: 18.63px;
  letter-spacing: 0.025px;
  color: #000;
}
.page p {
  margin: 0 0 18.63px;
  white-space: nowrap;
}
.page h2 {
  margin: -1px 0 0;
  padding: 21px 0 24px;
  font-size: 20px;
  line-height: 23px;
}
.diagram {
  position: absolute;
  left: 51px;
  top: 492px;
  background-color: #fff;
}
.shape > * {
  fill: #729fcf;
  stroke: #3465a4;
  stroke-width: 1;
}
.labels text {
  font-family: "Liberation Serif", serif;
  font-size: 16px;
  fill: #111;
}
.crop-mark {
  position: absolute;
  left: 718px;
  top: 776px;
  width: 13px;
  height: 14px;
  border-left: 1px solid #c0c0c0;
  border-top: 1px solid #c0c0c0;
}
.page-gap {
  width: 794.5px;
  height: 8px;
  margin-top: 7px;
  border-top: 1px solid #fff;
  border-bottom: 1px solid #fff;
}
.scrollbar {
  width: 12px;
  flex: none;
  position: relative;
  background-color: #383838;
}
.thumb {
  position: absolute;
  left: 3px;
  top: 49px;
  width: 6px;
  height: 128px;
  border-radius: 3px;
  background-color: #a8a8a8;
}
.deck-grip {
  width: 8px;
  flex: none;
  position: relative;
  border-left: 2px solid #7a7a7a;
  border-right: 2px solid #7a7a7a;
  border-top: 2px solid #7a7a7a;
}
.deck-handle {
  position: absolute;
  left: 0;
  top: 408px;
  width: 4px;
  height: 76px;
  background-color: #6a6a6a;
}
.sidebar {
  width: 39px;
  flex: none;
  display: flex;
  flex-direction: column;
  align-items: center;
  padding-top: 6px;
  border-top: 2px solid #7a7a7a;
}
.sidebar svg {
  flex: none;
}
.side-sep {
  width: 22px;
  height: 1px;
  margin: 7px 0 10px;
  background-color: #2c2c2c;
}
.sidebar > svg:nth-of-type(3) {
  margin-top: 13px;
}
.sidebar > svg:nth-of-type(4) {
  margin-top: 12px;
}
.sidebar > svg:nth-of-type(5) {
  margin-top: 13px;
}
.side-on {
  width: 32px;
  height: 31px;
  margin-top: 9px;
  display: flex;
  align-items: center;
  justify-content: center;
  border: 1px solid #aaa;
  border-radius: 3px;
}

/* status bar */
.statusbar {
  height: 21px;
  flex: none;
  display: flex;
  align-items: center;
  border-top: 1px solid #8a8a8a;
  background-color: #3c3c3c;
  font-size: 12px;
  color: #e6e6e6;
}
.cell {
  height: 20px;
  flex: none;
  display: flex;
  align-items: center;
  border-left: 1px solid #333;
}
.c-page {
  width: 221px;
  padding-left: 10px;
  border-left: none;
}
.c-words {
  width: 359px;
  padding-left: 9px;
}
.c-pstyle {
  width: 236px;
  padding-left: 8px;
}
.c-lang {
  width: 241px;
  justify-content: center;
}
.c-s0 {
  width: 68px;
}
.c-ins {
  width: 30px;
  justify-content: center;
}
.c-sel {
  width: 29px;
  justify-content: center;
}
.c-s1 {
  width: 28px;
}
.c-fill {
  flex: 1;
}
.c-views {
  width: 75px;
  padding-left: 11px;
  gap: 5px;
}
.c-zoom {
  width: 143px;
  padding: 0 6px 0 10px;
  gap: 5px;
}
.z-minus {
  width: 9px;
  height: 1px;
  background-color: #aaa;
}
.z-plus {
  width: 9px;
  height: 9px;
  background:
    linear-gradient(#aaa, #aaa) center / 100% 1px no-repeat,
    linear-gradient(#aaa, #aaa) center / 1px 100% no-repeat;
}
.z-track {
  position: relative;
  flex: 1;
  height: 2px;
  background-color: #aaa;
}
.z-tick {
  position: absolute;
  left: 32px;
  top: -3px;
  width: 2px;
  height: 8px;
  background-color: #aaa;
}
.z-thumb {
  position: absolute;
  left: 43px;
  top: -5px;
  width: 9px;
  height: 12px;
  border-radius: 50%;
  background-color: #eee;
}
.c-pct {
  width: 49px;
  justify-content: center;
  padding-right: 4px;
  font-size: 13px;
}
```
